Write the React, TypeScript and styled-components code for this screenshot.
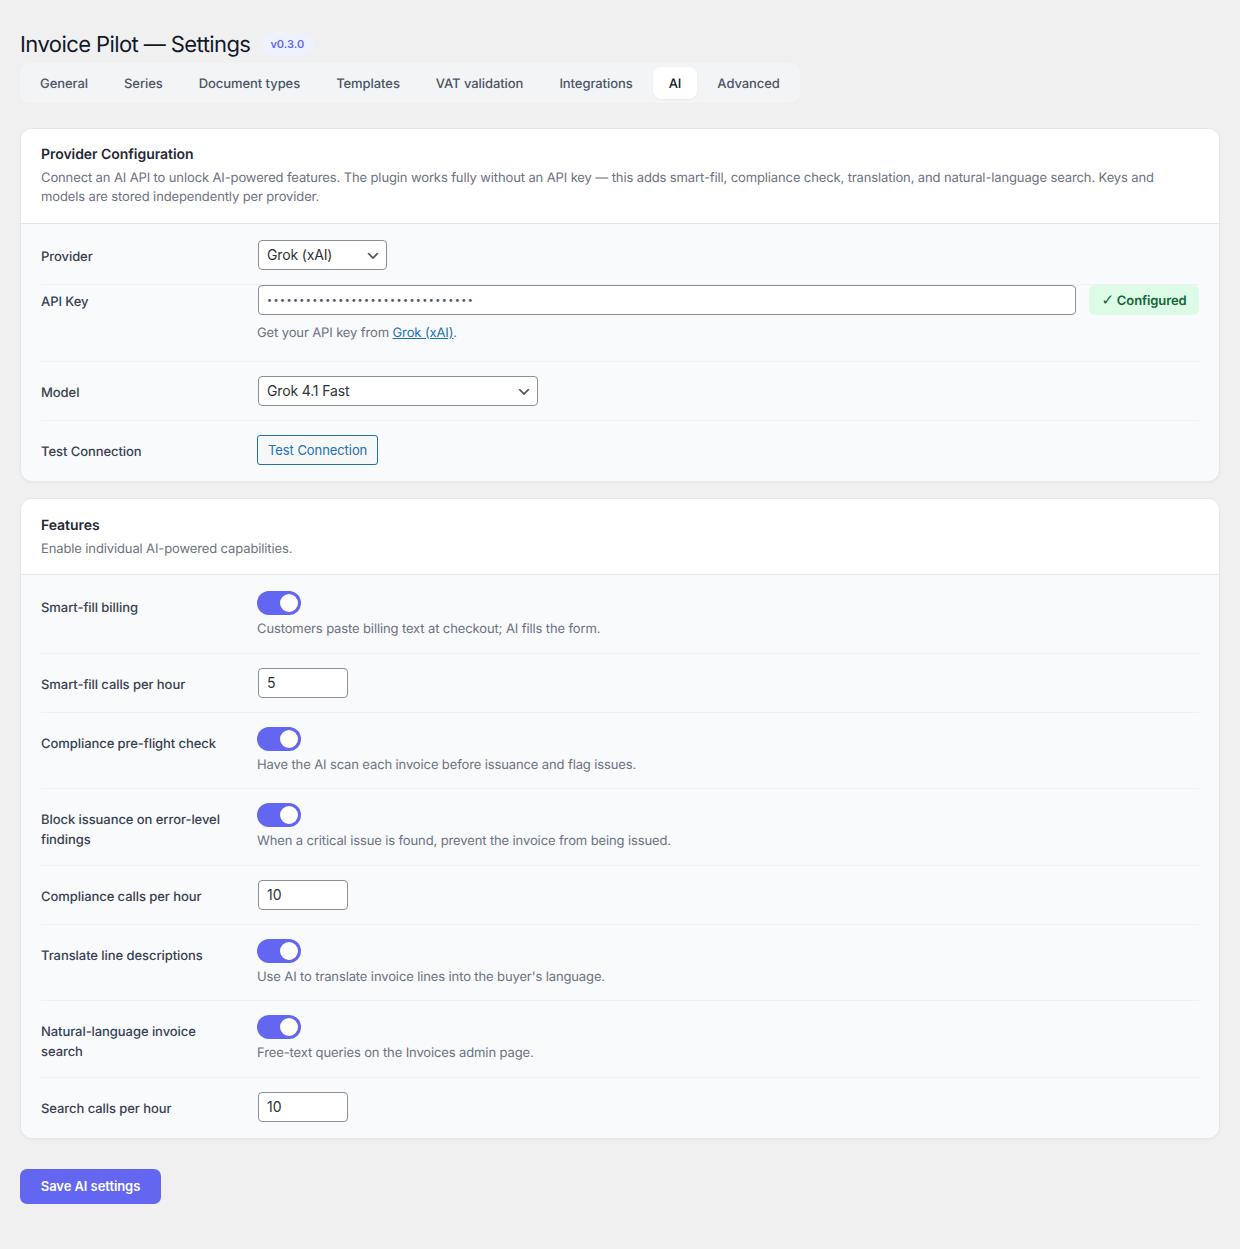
import React from "react";
import styled, { createGlobalStyle } from "styled-components";

const Global = createGlobalStyle`
  html, body { margin: 0; padding: 0; background: #f0f0f1; }
  body { font-family: Inter, "Noto Sans", sans-serif; color: #1d2327; text-rendering: geometricPrecision; }
  * { box-sizing: border-box; }
`;

const Page = styled.div`
  padding: 29px 20px 45px;
  min-height: 1249px;
`;
const TitleRow = styled.div`
  display: flex;
  align-items: center;
  gap: 10px;
  height: 30px;
  margin-bottom: 4px;
`;
const Title = styled.h1`
  margin: 0;
  padding-top: 1px;
  font-size: 22px;
  font-weight: 400;
  line-height: 30px;
  letter-spacing: -0.58px;
  color: #111827;
`;
const Version = styled.span`
  display: inline-flex;
  align-items: center;
  height: 22px;
  padding: 0 10px;
  border-radius: 11px;
  background: #eef2ff;
  color: #6366f1;
  font-size: 11px;
  font-weight: 600;
`;
const Tabs = styled.nav`
  display: flex;
  width: fit-content;
  gap: 4px;
  padding: 4px;
  height: 40px;
  background: #f3f4f6;
  border-radius: 10px;
  margin-bottom: 24.5px;
`;
const Tab = styled.a<{ $active?: boolean }>`
  display: flex;
  align-items: center;
  height: 32px;
  padding: 1px 16px 0;
  border-radius: 8px;
  font-size: 13px;
  font-weight: 500;
  letter-spacing: -0.065px;
  color: ${(p) => (p.$active ? "#111827" : "#4b5563")};
  background: ${(p) => (p.$active ? "#fff" : "transparent")};
  box-shadow: ${(p) => (p.$active ? "0 1px 2px rgba(0,0,0,.05)" : "none")};
`;
const Card = styled.section`
  background: #f9fafb;
  border: 1px solid #e5e7eb;
  border-radius: 12px;
  box-shadow: 0 1px 3px rgba(0, 0, 0, 0.04);
  overflow: hidden;
  margin-bottom: 16.4px;
`;
const CardHead = styled.header`
  background: #fff;
  padding: 16.3px 20px 15.2px;
  border-bottom: 1px solid #e5e7eb;
`;
const CardTitle = styled.h2`
  margin: 0 0 4px;
  font-size: 14px;
  font-weight: 600;
  line-height: 20px;
  letter-spacing: -0.05px;
  color: #1f2937;
`;
const CardDesc = styled.p`
  margin: 0;
  font-size: 13px;
  line-height: 19.5px;
  letter-spacing: -0.12px;
  color: #6b7280;
`;
const CardBody = styled.div`
  padding: 0 20px;
`;
const Row = styled.div<{ $flush?: boolean; $tail?: number }>`
  display: grid;
  grid-template-columns: 216px 1fr;
  padding: ${(p) => (p.$flush ? "0" : "14px")} 0 ${(p) => p.$tail ?? 14}px;
  border-bottom: 1px solid #f0f1f3;
  &:first-child { padding-top: 16px; }
  &:last-child { border-bottom: 0; padding-bottom: 16px; }
`;
const Label = styled.label`
  padding-top: 7.8px;
  padding-right: 20px;
  font-size: 13px;
  font-weight: 500;
  line-height: 19.5px;
  letter-spacing: -0.065px;
  color: #374151;
`;
const Field = styled.div`
  min-width: 0;
`;
const Help = styled.p<{ $gap?: number }>`
  margin: ${(p) => (p.$gap ?? 4) + 0.8}px 0 -0.8px;
  font-size: 13px;
  line-height: 19.5px;
  letter-spacing: -0.12px;
  color: #6b7280;
`;
const HelpLink = styled.a`
  color: #2271b1;
  text-decoration: underline;
`;
const chevron =
  "url(\"data:image/svg+xml,%3Csvg xmlns='http://www.w3.org/2000/svg' width='20' height='20' viewBox='0 0 20 20'%3E%3Cpath d='M5 6l5 5 5-5 2 1-7 7-7-7 2-1z' fill='%23555'/%3E%3C/svg%3E\")";
const Select = styled.select<{ $w: number }>`
  display: block;
  appearance: none;
  margin: 0 0 0 1px;
  width: ${(p) => p.$w}px;
  height: 30px;
  padding: 0 24px 0 8px;
  font: 400 14px/28px Inter, sans-serif;
  letter-spacing: -0.15px;
  color: #2c3338;
  background: #fff ${chevron} no-repeat right 5px top 55%;
  background-size: 16px 16px;
  border: 1px solid #8c8f94;
  border-radius: 4px;
`;
const TextInput = styled.input<{ $w?: number }>`
  display: block;
  margin: 0 0 0 1px;
  width: ${(p) => (p.$w ? `${p.$w}px` : "100%")};
  height: 30px;
  padding: 0 8px;
  font: 400 14px/28px Inter, sans-serif;
  color: #2c3338;
  background: #fff;
  border: 1px solid #8c8f94;
  border-radius: 4px;
  outline: none;
`;
const SecretInput = styled(TextInput)`
  font-size: 9px;
  letter-spacing: 1.41px;
  color: #50575e;
`;
const KeyRow = styled.div`
  display: flex;
  align-items: center;
  gap: 13px;
`;
const StatusBadge = styled.span`
  flex: none;
  display: inline-flex;
  align-items: center;
  justify-content: center;
  gap: 3px;
  width: 110px;
  height: 30px;
  padding-top: 2px;
  border-radius: 6px;
  background: #dcfce7;
  color: #166534;
  font-size: 13px;
  font-weight: 600;
  letter-spacing: -0.1px;
`;
const StatusTick = styled.span`
  font-family: "DejaVu Sans", sans-serif;
  font-size: 15px;
  line-height: 19px;
  font-weight: 700;
`;
const OutlineButton = styled.button`
  display: block;
  height: 30px;
  padding: 0 10px;
  font: 400 13px/28px Inter, sans-serif;
  letter-spacing: -0.07px;
  color: #2271b1;
  background: #f6f7f7;
  border: 1px solid #2271b1;
  border-radius: 3px;
`;
const Toggle = styled.span`
  display: flex;
  justify-content: flex-end;
  align-items: center;
  width: 44px;
  height: 24px;
  padding: 3px;
  border-radius: 12px;
  background: #6366f1;
  &::after {
    content: "";
    width: 18px;
    height: 18px;
    border-radius: 50%;
    background: #fff;
  }
`;
const SaveButton = styled.button`
  display: block;
  margin-top: 30px;
  width: 141px;
  height: 35px;
  padding: 0 0 1px;
  border: 0;
  border-radius: 7px;
  background: #6366f1;
  color: #fff;
  font: 600 13px Inter, sans-serif;
  letter-spacing: -0.07px;
`;

const tabs = ["General", "Series", "Document types", "Templates", "VAT validation", "Integrations", "AI", "Advanced"];

type Feature =
  | { label: string; help: string }
  | { label: string; value: string };

const features: Feature[] = [
  { label: "Smart-fill billing", help: "Customers paste billing text at checkout; AI fills the form." },
  { label: "Smart-fill calls per hour", value: "5" },
  { label: "Compliance pre-flight check", help: "Have the AI scan each invoice before issuance and flag issues." },
  { label: "Block issuance on error-level findings", help: "When a critical issue is found, prevent the invoice from being issued." },
  { label: "Compliance calls per hour", value: "10" },
  { label: "Translate line descriptions", help: "Use AI to translate invoice lines into the buyer's language." },
  { label: "Natural-language invoice search", help: "Free-text queries on the Invoices admin page." },
  { label: "Search calls per hour", value: "10" },
];

export default function App() {
  return (
    <Page>
      <Global />
      <TitleRow>
        <Title>Invoice Pilot — Settings</Title>
        <Version>v0.3.0</Version>
      </TitleRow>
      <Tabs>
        {tabs.map((t) => (
          <Tab key={t} $active={t === "AI"}>{t}</Tab>
        ))}
      </Tabs>

      <Card>
        <CardHead>
          <CardTitle>Provider Configuration</CardTitle>
          <CardDesc>
            Connect an AI API to unlock AI-powered features. The plugin works fully without an API key — this adds smart-fill, compliance check, translation, and natural-language search. Keys and models are stored independently per provider.
          </CardDesc>
        </CardHead>
        <CardBody>
          <Row>
            <Label>Provider</Label>
            <Field>
              <Select $w={129} defaultValue="grok"><option value="grok">Grok (xAI)</option></Select>
            </Field>
          </Row>
          <Row $flush $tail={18.5}>
            <Label>API Key</Label>
            <Field>
              <KeyRow>
                <SecretInput type="password" readOnly value="xai-0123456789abcdefghijklmnopqr" />
                <StatusBadge><StatusTick>✓</StatusTick>Configured</StatusBadge>
              </KeyRow>
              <Help $gap={8}>Get your API key from <HelpLink href="#">Grok (xAI)</HelpLink>.</Help>
            </Field>
          </Row>
          <Row>
            <Label>Model</Label>
            <Field>
              <Select $w={280} defaultValue="fast"><option value="fast">Grok 4.1 Fast</option></Select>
            </Field>
          </Row>
          <Row>
            <Label>Test Connection</Label>
            <Field>
              <OutlineButton type="button">Test Connection</OutlineButton>
            </Field>
          </Row>
        </CardBody>
      </Card>

      <Card>
        <CardHead>
          <CardTitle>Features</CardTitle>
          <CardDesc>Enable individual AI-powered capabilities.</CardDesc>
        </CardHead>
        <CardBody>
          {features.map((f) => (
            <Row key={f.label}>
              <Label>{f.label}</Label>
              <Field>
                {"help" in f ? (
                  <>
                    <Toggle />
                    <Help>{f.help}</Help>
                  </>
                ) : (
                  <TextInput $w={90} type="number" readOnly value={f.value} />
                )}
              </Field>
            </Row>
          ))}
        </CardBody>
      </Card>

      <SaveButton type="button">Save AI settings</SaveButton>
    </Page>
  );
}
